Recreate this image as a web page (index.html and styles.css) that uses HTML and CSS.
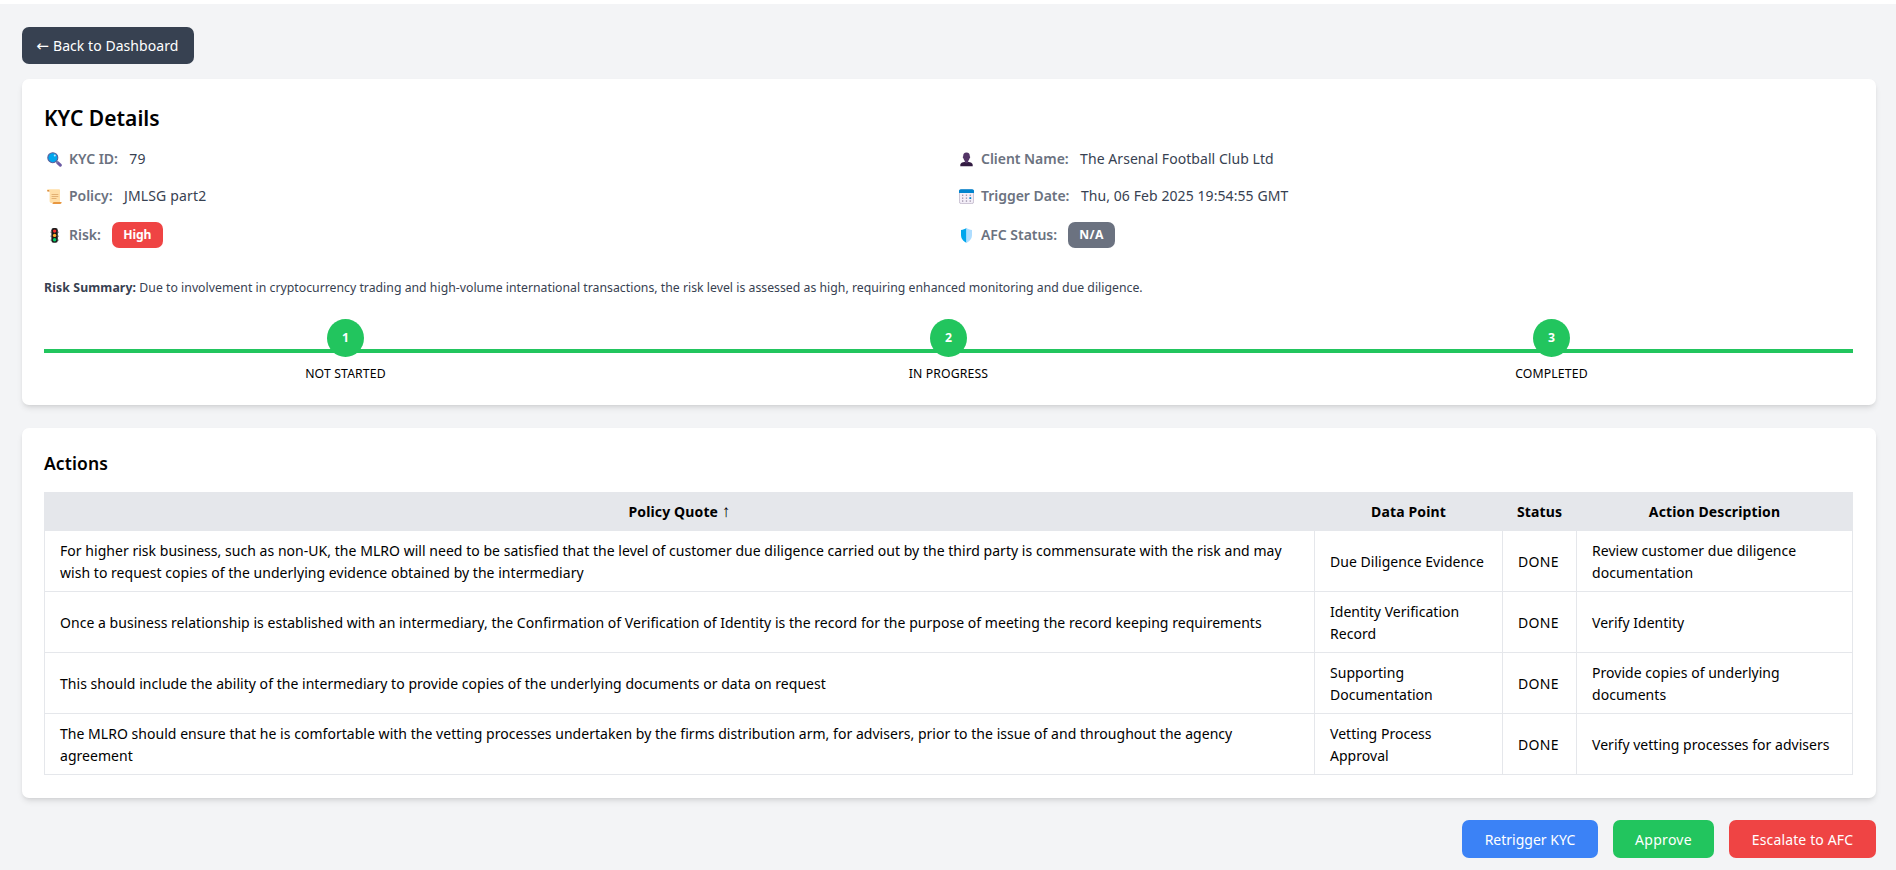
FILE: index.html
```html
<!DOCTYPE html>
<html lang="en">
<head>
<meta charset="utf-8">
<title>KYC Details</title>
<link rel="stylesheet" href="styles.css">
</head>
<body>
<main class="page">
  <a class="btn btn-back"><span class="arrow-left">←</span><span class="back-label">Back to Dashboard</span></a>

  <section class="card details">
    <h1 class="title">KYC Details</h1>
    <div class="fields">
      <div class="field">
        <svg class="icon" viewBox="0 0 15 15"><path d="M10.600 10.600 13.300 13.200" stroke="#6b5aa3" stroke-width="3" stroke-linecap="round"/><path d="M9 9 10.500 10.500" stroke="#8a8fa8" stroke-width="1.600"/><circle cx="5.800" cy="5.700" r="5" fill="#00a6ed" stroke="#5b5f9b" stroke-width="1.100"/><circle cx="7.800" cy="3.600" r="1" fill="#b9e6ff"/></svg>
        <span class="label">KYC ID:</span><span class="value">79</span>
      </div>
      <div class="field">
        <svg class="icon" viewBox="0 0 15 15"><path d="M1.300 14.300V12.700C1.300 10.900 3.500 10.300 5.500 9.900H9.500C11.500 10.300 13.700 10.900 13.700 12.700V14.300Z" fill="#321b41"/><path d="M7.500.500C9.800.500 11 1.800 10.800 4.300 11.500 4.800 11.200 6.200 10.500 6.400 10.200 7.700 9.700 8.400 9.200 8.900V10.300C8.600 11.500 6.400 11.500 5.800 10.300V8.900C5.300 8.400 4.800 7.700 4.500 6.400 3.800 6.200 3.500 4.800 4.200 4.300 4 1.800 5.200.500 7.500.500Z" fill="#533566"/></svg>
        <span class="label">Client Name:</span><span class="value">The Arsenal Football Club Ltd</span>
      </div>
      <div class="field">
        <svg class="icon" viewBox="0 0 15 15"><path d="M0 1.300C0 .5.700.200 1.300.200H12C12.700.200 13 .700 13 1.300V14H4.500C3.200 14 2.600 13.300 2.600 12V2.500H.8C.3 2.500 0 2 0 1.300Z" fill="#ffdea7"/><path d="M.1 1.700C.2.600 2.300.600 2.500 2.500H.9C.4 2.500.100 2.200.1 1.700Z" fill="#d98a3c"/><path d="M6.300 13.100H14.600C14.700 14.400 14 14.900 13.200 14.900H5C5.900 14.700 6.300 14 6.300 13.100Z" fill="#e8973f"/><path d="M4.600 5.500H11.300M4.600 7.500H11.300M4.600 9.500H9.500" stroke="#dba566" stroke-width=".8"/></svg>
        <span class="label">Policy:</span><span class="value value-policy">JMLSG part2</span>
      </div>
      <div class="field">
        <svg class="icon" viewBox="0 0 15 15"><rect x=".4" y=".8" width="14.200" height="13.800" rx="1.800" fill="#f3eef8" stroke="#bbb2c6" stroke-width=".8"/><path d="M0 4V2C0 1 .8.200 1.800.200H13.200C14.200.200 15 1 15 2V4Z" fill="#0084ce"/><g fill="#998ea4"><rect x="3" y="5.600" width="1.300" height="1.300"/><rect x="6.800" y="5.600" width="1.300" height="1.300"/><rect x="10.600" y="5.600" width="1.300" height="1.300"/><rect x="3" y="8.500" width="1.300" height="1.300"/><rect x="6.800" y="8.500" width="1.300" height="1.300"/><rect x="3" y="11.400" width="1.300" height="1.300"/><rect x="6.800" y="11.400" width="1.300" height="1.300"/><rect x="10.600" y="11.400" width="1.300" height="1.300"/></g><rect x="10.400" y="8.200" width="1.800" height="1.800" fill="#0084ce"/></svg>
        <span class="label">Trigger Date:</span><span class="value value-date">Thu, 06 Feb 2025 19:54:55 GMT</span>
      </div>
      <div class="field">
        <svg class="icon" viewBox="0 0 15 15"><rect x="4.400" y=".1" width="6.400" height="14.600" rx="2.200" fill="#1c1c1c"/><path d="M4.100 3.500V5M4.100 7.500V9M11.100 3.500V5M11.100 7.500V9M4.100 11.500V12.800M11.100 11.500V12.800" stroke="#3a3a3a" stroke-width=".7"/><circle cx="7.600" cy="3.100" r="1.700" fill="#f8312f"/><circle cx="7.600" cy="7.400" r="1.700" fill="#ffb02e"/><circle cx="7.600" cy="11.700" r="1.700" fill="#00d26a"/></svg>
        <span class="label">Risk:</span><span class="badge badge-high">High</span>
      </div>
      <div class="field">
        <svg class="icon" viewBox="0 0 15 15"><path d="M7.500 0C5.800 1.200 4.200 1.700 2 1.900V7C2 10.800 4.500 13.500 7.500 14.700Z" fill="#00a6ed"/><path d="M7.500 0C9.200 1.200 10.800 1.700 13 1.900V7C13 10.800 10.500 13.500 7.500 14.700Z" fill="#aeddff"/></svg>
        <span class="label">AFC Status:</span><span class="badge badge-na">N/A</span>
      </div>
    </div>
    <p class="summary"><strong>Risk Summary:</strong> Due to involvement in cryptocurrency trading and high-volume international transactions, the risk level is assessed as high, requiring enhanced monitoring and due diligence.</p>
    <ol class="stepper">
      <li class="step"><span class="dot">1</span><span class="step-label">NOT STARTED</span></li>
      <li class="step"><span class="dot">2</span><span class="step-label">IN PROGRESS</span></li>
      <li class="step"><span class="dot">3</span><span class="step-label">COMPLETED</span></li>
    </ol>
  </section>

  <section class="card actions">
    <h2 class="subtitle">Actions</h2>
    <table class="table">
      <colgroup><col class="c-quote"><col class="c-point"><col class="c-status"><col class="c-desc"></colgroup>
      <thead>
        <tr><th>Policy Quote <span class="arrow-up">↑</span></th><th>Data Point</th><th>Status</th><th>Action Description</th></tr>
      </thead>
      <tbody>
        <tr><td class="quote">For higher risk business, such as non-UK, the MLRO will need to be satisfied that the level of customer due diligence carried out by the third party is commensurate with the risk and may wish to request copies of the underlying evidence obtained by the intermediary</td><td>Due Diligence Evidence</td><td class="status">DONE</td><td>Review customer due diligence documentation</td></tr>
        <tr><td class="quote">Once a business relationship is established with an intermediary, the Confirmation of Verification of Identity is the record for the purpose of meeting the record keeping requirements</td><td>Identity Verification Record</td><td class="status">DONE</td><td>Verify Identity</td></tr>
        <tr><td class="quote">This should include the ability of the intermediary to provide copies of the underlying documents or data on request</td><td>Supporting Documentation</td><td class="status">DONE</td><td>Provide copies of underlying documents</td></tr>
        <tr><td class="quote">The MLRO should ensure that he is comfortable with the vetting processes undertaken by the firms distribution arm, for advisers, prior to the issue of and throughout the agency agreement</td><td>Vetting Process Approval</td><td class="status">DONE</td><td>Verify vetting processes for advisers</td></tr>
      </tbody>
    </table>
  </section>

  <div class="buttons">
    <button class="btn btn-retrigger">Retrigger KYC</button>
    <button class="btn btn-approve">Approve</button>
    <button class="btn btn-escalate">Escalate to AFC</button>
  </div>
</main>
</body>
</html>
```

FILE: styles.css
```css
* { box-sizing: border-box; margin: 0; padding: 0; }

body {
  background: #f3f4f6;
  border-top: 4px solid #fff;
  height: 870px;
  overflow: hidden;
  font: 14px/22px "Noto Sans", "Open Sans", sans-serif;
  letter-spacing: 0.055px;
  color: #000;
}

.page {
  padding: 23px 20px 0 22px;
  display: flex;
  flex-direction: column;
  align-items: stretch;
}

.btn {
  border: 0;
  border-radius: 7px;
  color: #fff;
  font: inherit;
  height: 38px;
  padding-top: 1px;
  text-align: center;
  white-space: nowrap;
}
.btn-back {
  align-self: flex-start;
  display: flex;
  align-items: center;
  width: 172px;
  height: 37px;
  padding: 0 0 0 14px;
  background: #374151;
}
.arrow-left { font-family: "DejaVu Sans", sans-serif; font-size: 15px; width: 13px; }
.back-label { margin-left: 4px; }
.arrow-up { font-family: "Liberation Sans", sans-serif; font-size: 17px; line-height: 0; font-weight: 400; }

.card {
  background: #fff;
  border-radius: 7px;
  padding: 22px 23px 22px 22px;
  box-shadow: 0 4px 6px -1px rgba(0, 0, 0, .1), 0 2px 4px -2px rgba(0, 0, 0, .1);
}

.details { margin-top: 15px; height: 326px; }
.title { padding-top: 1px; font-size: 21px; line-height: 32px; font-weight: 600; letter-spacing: .03px; }

.fields {
  margin-top: 14px;
  display: grid;
  grid-template-columns: 1fr 1fr;
  column-gap: 15px;
  row-gap: 15px;
}
.field { display: flex; align-items: center; }
.icon { width: 15px; height: 15px; margin: 0 7.5px 0 2.5px; flex: none; }
.label { color: #6b7280; font-weight: 600; letter-spacing: -0.04px; }
.value { color: #374151; margin-left: 11.5px; }
.value-policy { letter-spacing: .15px; }
.value-date { letter-spacing: .08px; }
.badge {
  margin-left: 11px;
  height: 26px;
  border-radius: 7px;
  color: #fff;
  font-size: 12.2px;
  font-weight: 700;
  line-height: 26px;
  text-align: center;
}
.badge-high { width: 51px; background: #ef4444; letter-spacing: -.15px; }
.badge-na { width: 47px; background: #6b7280; letter-spacing: .4px; }

.summary {
  margin-top: 31px;
  color: #374151;
  font-size: 12.25px;
  line-height: 18px;
  letter-spacing: .017px;
}
.summary strong { letter-spacing: .13px; }

.stepper {
  margin-top: 22px;
  list-style: none;
  display: grid;
  grid-template-columns: repeat(3, 1fr);
  background: linear-gradient(#22c55e, #22c55e) 0 30px / 100% 4px no-repeat;
}
.step { display: flex; flex-direction: column; align-items: center; }
.dot {
  width: 37px;
  height: 38px;
  border-radius: 50%;
  background: #22c55e;
  color: #fff;
  font-size: 12.25px;
  font-weight: 700;
  line-height: 37px;
  text-align: center;
}
.step-label { margin-top: 8px; font-size: 12.25px; line-height: 18px; letter-spacing: .13px; }

.actions { margin-top: 23px; height: 370px; }
.subtitle { font-size: 17.5px; line-height: 27px; font-weight: 600; letter-spacing: .1px; }

.table {
  margin-top: 15px;
  width: 1809px;
  table-layout: fixed;
  border-collapse: collapse;
}
.c-quote { width: 1270px; }
.c-point { width: 188px; }
.c-status { width: 74px; }
.c-desc { width: 276px; }
.table th, .table td { border: 1px solid #e5e7eb; }
.table th {
  background: #e5e7eb;
  height: 38px;
  font-weight: 700;
  letter-spacing: .13px;
}
.table td { height: 61px; padding: 9px 14px 7px 15px; vertical-align: middle; letter-spacing: .03px; }
.table .quote { letter-spacing: .035px; }
.table .status { letter-spacing: .35px; }

.buttons {
  margin-top: 22px;
  display: flex;
  justify-content: flex-end;
  gap: 15px;
}
.btn-retrigger { width: 136px; background: #3b82f6; }
.btn-approve { width: 101px; background: #22c55e; letter-spacing: .3px; }
.btn-escalate { width: 147px; background: #ef4444; letter-spacing: .13px; }
```
